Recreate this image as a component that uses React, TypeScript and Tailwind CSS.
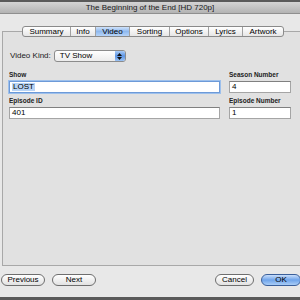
const tabs = ['Summary', 'Info', 'Video', 'Sorting', 'Options', 'Lyrics', 'Artwork']
const tabW: Record<string, string> = {
  Summary: 'w-[47px]',
  Info: 'w-[25px]',
  Video: 'w-[34px]',
  Sorting: 'w-[40px]',
  Options: 'w-[39px]',
  Lyrics: 'w-[34px]',
  Artwork: 'w-[41px]',
}

function Field({ value, focus = false, className = '' }: { value: string; focus?: boolean; className?: string }) {
  return (
    <div
      className={
        'h-[12px] bg-white flex items-center px-[2px] text-[8px] leading-none text-black ' +
        (focus
          ? 'border border-[#6d9ad8] shadow-[0_0_0_1px_#9dc0ec] '
          : 'border border-[#a5a5a5] border-t-[#808080] ') +
        className
      }
    >
      {focus ? <span className="bg-[#b8d4f6] px-[1px]">{value}</span> : <span>{value}</span>}
    </div>
  )
}

function Label({ children }: { children: React.ReactNode }) {
  return <div className="text-[6.5px] font-bold leading-none text-[#222] h-[7px] mb-[2px]">{children}</div>
}

function Btn({ children, primary = false, className = '' }: { children: React.ReactNode; primary?: boolean; className?: string }) {
  return (
    <div
      className={
        'h-[12px] rounded-full flex items-center justify-center text-[8px] leading-none text-black ' +
        (primary
          ? 'border border-[#3a5f9a] bg-gradient-to-b from-[#c9defa] via-[#6fa4ea] to-[#a9cdf7] '
          : 'border border-[#6e6e6e] bg-gradient-to-b from-[#ffffff] via-[#f0f0f0] to-[#e2e2e2] ') +
        className
      }
    >
      {children}
    </div>
  )
}

export default function App() {
  return (
    <div
      className="w-[300px] h-[300px] overflow-hidden bg-[#e8e8e8] flex flex-col"
      style={{ fontFamily: '"Liberation Sans", Arial, sans-serif' }}
    >
      <div className="h-[2px] bg-[#5a5a5a]" />
      <div className="h-[12px] bg-gradient-to-b from-[#d4d4d4] to-[#b3b3b3] border-b border-[#8f8f8f] flex items-center justify-center text-[8px] leading-none text-[#1a1a1a]">
        The Beginning of the End [HD 720p]
      </div>

      <div className="mt-[17px] ml-[2px] w-[302px] h-[235px] border border-[#a8a8a8] bg-[#e1e1e1] flex flex-col">
        <div className="-mt-[6px] ml-[19px] flex h-[11px] rounded-[3px] border border-[#8a8a8a] bg-gradient-to-b from-[#ffffff] to-[#e6e6e6] w-fit overflow-hidden">
          {tabs.map((t, i) => (
            <div
              key={t}
              className={
                'flex items-center justify-center text-[8px] leading-none text-black ' +
                tabW[t] +
                (i > 0 ? ' border-l border-[#a0a0a0]' : '') +
                (t === 'Video' ? ' bg-gradient-to-b from-[#cfe2fa] via-[#8fb9ee] to-[#b7d4f8]' : '')
              }
            >
              {t}
            </div>
          ))}
        </div>

        <div className="mt-[13px] ml-[7px] flex items-center gap-[3px]">
          <span className="text-[8px] leading-none text-[#1a1a1a]">Video Kind:</span>
          <div className="w-[72px] h-[12px] rounded-[3px] border border-[#8c8c8c] bg-gradient-to-b from-white to-[#ececec] flex items-center overflow-hidden">
            <span className="flex-1 pl-[5px] text-[8px] leading-none text-black">TV Show</span>
            <div className="w-[10px] h-full bg-gradient-to-b from-[#a9cbf6] via-[#5d95e4] to-[#9cc3f4] flex flex-col items-center justify-center gap-[1px]">
              <svg width="5" height="3" viewBox="0 0 5 3"><path d="M0 3L2.5 0L5 3Z" fill="#111" /></svg>
              <svg width="5" height="3" viewBox="0 0 5 3"><path d="M0 0L2.5 3L5 0Z" fill="#111" /></svg>
            </div>
          </div>
        </div>

        <div className="mt-[10px] ml-[6px] flex gap-[9px]">
          <div className="w-[211px] flex flex-col">
            <Label>Show</Label>
            <Field value="LOST" focus />
            <div className="h-[5px]" />
            <Label>Episode ID</Label>
            <Field value="401" />
          </div>
          <div className="w-[62px] flex flex-col">
            <Label>Season Number</Label>
            <Field value="4" />
            <div className="h-[5px]" />
            <Label>Episode Number</Label>
            <Field value="1" />
          </div>
        </div>
      </div>

      <div className="mt-[8px] flex items-center px-[1px]">
        <Btn className="w-[44px]">Previous</Btn>
        <Btn className="w-[44px] ml-[7px]">Next</Btn>
        <div className="flex-1" />
        <Btn className="w-[39px]">Cancel</Btn>
        <Btn primary className="w-[40px] ml-[7px] -mr-[2px]">OK</Btn>
      </div>
      <div className="flex-1" />
      <div className="h-[3px] bg-[#5a5a5a]" />
    </div>
  )
}
